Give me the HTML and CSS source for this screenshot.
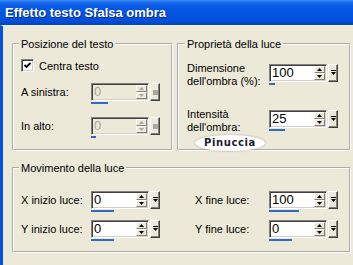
FILE: index.html
```html
<!DOCTYPE html>
<html lang="it">

<head>
    <meta charset="UTF-8">
    <title>Effetto testo Sfalsa ombra</title>
    <link rel="stylesheet" href="styles.css">
</head>

<body>
    <div class="window">
        <div class="titlebar">Effetto testo Sfalsa ombra</div>
        <div class="content">
            <div class="top-row">
                <fieldset class="group group-pos">
                    <legend>Posizione del testo</legend>
                    <label class="check-row">
                        <span class="checkbox">
                            <svg width="9" height="9" viewBox="0 0 9 9"><path d="M1.5 4 L3.5 6 L7.5 2" fill="none" stroke="#000" stroke-width="1.8"/></svg>
                        </span>
                        Centra testo
                    </label>
                    <div class="field-row first">
                        <span class="label">A sinistra:</span>
                        <div class="spin off">
                            <div class="spin-main">
                                <div class="spin-box">
                                    <span class="spin-value">0</span>
                                    <span class="spin-arrows">
                                        <span class="arrow"><svg width="5" height="3"><polygon points="0,3 2.5,0 5,3"/></svg></span>
                                        <span class="arrow"><svg width="5" height="3"><polygon points="0,0 5,0 2.5,3"/></svg></span>
                                    </span>
                                </div>
                                <span class="spin-btn"><i class="dot"></i></span>
                            </div>
                            <span class="spin-bar" style="width:17px"></span>
                        </div>
                    </div>
                    <div class="field-row">
                        <span class="label">In alto:</span>
                        <div class="spin off">
                            <div class="spin-main">
                                <div class="spin-box">
                                    <span class="spin-value">0</span>
                                    <span class="spin-arrows">
                                        <span class="arrow"><svg width="5" height="3"><polygon points="0,3 2.5,0 5,3"/></svg></span>
                                        <span class="arrow"><svg width="5" height="3"><polygon points="0,0 5,0 2.5,3"/></svg></span>
                                    </span>
                                </div>
                                <span class="spin-btn"><i class="dot"></i></span>
                            </div>
                            <span class="spin-bar" style="width:5px"></span>
                        </div>
                    </div>
                </fieldset>

                <fieldset class="group group-light">
                    <legend>Proprietà della luce</legend>
                    <div class="light-row first">
                        <span class="label two">Dimensione<br>dell'ombra (%):</span>
                        <div class="spin">
                            <div class="spin-main">
                                <div class="spin-box">
                                    <span class="spin-value">100</span>
                                    <span class="spin-arrows">
                                        <span class="arrow"><svg width="5" height="3"><polygon points="0,3 2.5,0 5,3"/></svg></span>
                                        <span class="arrow"><svg width="5" height="3"><polygon points="0,0 5,0 2.5,3"/></svg></span>
                                    </span>
                                </div>
                                <span class="spin-btn"><svg width="5" height="6"><rect x="0" y="0" width="5" height="1"/><polygon points="0,2 5,2 2.5,5"/></svg></span>
                            </div>
                            <span class="spin-bar" style="width:6px"></span>
                        </div>
                    </div>
                    <div class="light-row">
                        <span class="label two">Intensità<br>dell'ombra:</span>
                        <div class="spin">
                            <div class="spin-main">
                                <div class="spin-box">
                                    <span class="spin-value">25</span>
                                    <span class="spin-arrows">
                                        <span class="arrow"><svg width="5" height="3"><polygon points="0,3 2.5,0 5,3"/></svg></span>
                                        <span class="arrow"><svg width="5" height="3"><polygon points="0,0 5,0 2.5,3"/></svg></span>
                                    </span>
                                </div>
                                <span class="spin-btn"><svg width="5" height="6"><rect x="0" y="0" width="5" height="1"/><polygon points="0,2 5,2 2.5,5"/></svg></span>
                            </div>
                            <span class="spin-bar" style="width:16px"></span>
                        </div>
                    </div>
                </fieldset>
            </div>

            <fieldset class="group group-move">
                <legend>Movimento della luce</legend>
                <div class="move-grid">
                    <span class="label">X inizio luce:</span>
                    <div class="spin">
                        <div class="spin-main">
                            <div class="spin-box">
                                <span class="spin-value">0</span>
                                <span class="spin-arrows">
                                    <span class="arrow"><svg width="5" height="3"><polygon points="0,3 2.5,0 5,3"/></svg></span>
                                    <span class="arrow"><svg width="5" height="3"><polygon points="0,0 5,0 2.5,3"/></svg></span>
                                </span>
                            </div>
                            <span class="spin-btn"><svg width="5" height="6"><rect x="0" y="0" width="5" height="1"/><polygon points="0,2 5,2 2.5,5"/></svg></span>
                        </div>
                        <span class="spin-bar" style="width:23px"></span>
                    </div>
                    <span></span>
                    <span class="label">X fine luce:</span>
                    <div class="spin">
                        <div class="spin-main">
                            <div class="spin-box">
                                <span class="spin-value">100</span>
                                <span class="spin-arrows">
                                    <span class="arrow"><svg width="5" height="3"><polygon points="0,3 2.5,0 5,3"/></svg></span>
                                    <span class="arrow"><svg width="5" height="3"><polygon points="0,0 5,0 2.5,3"/></svg></span>
                                </span>
                            </div>
                            <span class="spin-btn"><svg width="5" height="6"><rect x="0" y="0" width="5" height="1"/><polygon points="0,2 5,2 2.5,5"/></svg></span>
                        </div>
                        <span class="spin-bar" style="width:30px"></span>
                    </div>

                    <span class="label">Y inizio luce:</span>
                    <div class="spin">
                        <div class="spin-main">
                            <div class="spin-box">
                                <span class="spin-value">0</span>
                                <span class="spin-arrows">
                                    <span class="arrow"><svg width="5" height="3"><polygon points="0,3 2.5,0 5,3"/></svg></span>
                                    <span class="arrow"><svg width="5" height="3"><polygon points="0,0 5,0 2.5,3"/></svg></span>
                                </span>
                            </div>
                            <span class="spin-btn"><svg width="5" height="6"><rect x="0" y="0" width="5" height="1"/><polygon points="0,2 5,2 2.5,5"/></svg></span>
                        </div>
                        <span class="spin-bar" style="width:23px"></span>
                    </div>
                    <span></span>
                    <span class="label">Y fine luce:</span>
                    <div class="spin">
                        <div class="spin-main">
                            <div class="spin-box">
                                <span class="spin-value">0</span>
                                <span class="spin-arrows">
                                    <span class="arrow"><svg width="5" height="3"><polygon points="0,3 2.5,0 5,3"/></svg></span>
                                    <span class="arrow"><svg width="5" height="3"><polygon points="0,0 5,0 2.5,3"/></svg></span>
                                </span>
                            </div>
                            <span class="spin-btn"><svg width="5" height="6"><rect x="0" y="0" width="5" height="1"/><polygon points="0,2 5,2 2.5,5"/></svg></span>
                        </div>
                        <span class="spin-bar" style="width:23px"></span>
                    </div>
                </div>
            </fieldset>

            <!-- firma sopra il riquadro -->
            <div class="stamp">Pinuccia</div>
        </div>
    </div>
</body>

</html>
```

FILE: styles.css
```css
* {
    margin: 0;
    padding: 0;
    box-sizing: border-box;
}

body {
    width: 353px;
    height: 265px;
    overflow: hidden;
    background: #ece9d8;
    font-family: "Liberation Sans", Arial, sans-serif;
    font-size: 11px;
    color: #000;
}

.window {
    height: 265px;
    background: #ece9d8;
}

.titlebar {
    height: 25px;
    line-height: 26px;
    padding-left: 5px;
    color: #fff;
    font-size: 13px;
    font-weight: bold;
    text-shadow: 1px 1px #0a2b8c;
    background: linear-gradient(#3b8cf6 0, #1466ec 3px, #0558e4 8px, #0254e0 16px, #024ed6 21px, #0144c0 25px);
}

.content {
    position: relative;
    height: 240px;
    border-left: 3px solid #0652dc;
    border-top: 1px solid #f6f5ee;
    padding: 11px 2px 0 9px;
}

.top-row {
    display: flex;
    gap: 4px;
}

/* group box */
.group {
    min-width: 0;
    border: 2px groove #fff;
    padding: 0 7px;
}

.group legend {
    margin-left: -2px;
    padding: 0 2px;
    line-height: 14px;
    font-size: 11px;
    background: #ece9d8;
}

.group-pos {
    width: 161px;
    padding-bottom: 11px;
}

.group-light {
    flex: 1;
    padding-left: 8px;
}

.group-move {
    margin-top: 10px;
    padding-bottom: 10px;
}

.label {
    line-height: 18px;
    white-space: nowrap;
}

.label.two {
    line-height: 13px;
}

/* checkbox */
.check-row {
    display: flex;
    align-items: center;
    gap: 5px;
    height: 13px;
    margin-top: 8px;
}

.checkbox {
    width: 13px;
    height: 13px;
    display: flex;
    align-items: center;
    justify-content: center;
    background: #fff;
    border: 1px solid;
    border-color: #808080 #fff #fff #808080;
    box-shadow: inset 1px 1px #404040, inset -1px -1px #d4d0c8;
}

.field-row {
    display: flex;
    margin-top: 13px;
}

.field-row.first {
    margin-top: 11px;
}

.field-row .label {
    width: 70px;
}

.light-row {
    display: flex;
    margin-top: 20px;
}

.light-row.first {
    margin-top: 11px;
}

.light-row .label {
    width: 82px;
}

.light-row .spin {
    margin-top: 2px;
}

.move-grid {
    display: grid;
    grid-template-columns: 70px 69px 35px 74px 69px;
    row-gap: 8px;
    margin-top: 16px;
}

/* spin control */
.spin {
    display: flex;
    flex-direction: column;
    width: 69px;
}

.spin-main {
    display: flex;
    gap: 1px;
    height: 18px;
}

.spin-box {
    width: 58px;
    display: flex;
    padding: 1px;
    background: #fff;
    border: 1px solid;
    border-color: #808080 #fff #fff #808080;
    box-shadow: inset 1px 1px #404040, inset -1px -1px #d4d0c8;
}

.spin-value {
    flex: 1;
    padding-left: 1px;
    font-size: 13px;
    line-height: 14px;
}

.spin-arrows {
    width: 11px;
    display: flex;
    flex-direction: column;
}

.arrow {
    flex: 1;
    display: flex;
    align-items: center;
    justify-content: center;
    background: #ece9d8;
    border: 1px solid;
    border-color: #fff #808080 #808080 #fff;
}

.arrow svg,
.spin-btn svg {
    display: block;
    fill: #000;
}

.spin-btn {
    width: 10px;
    display: flex;
    align-items: center;
    justify-content: center;
    background: #ece9d8;
    border: 1px solid;
    border-color: #fff #404040 #404040 #fff;
    box-shadow: inset -1px -1px #808080;
}

.spin-bar {
    display: block;
    height: 2px;
    margin-top: 1px;
    background: #316ac5;
}

.spin.off .spin-box {
    background: #ece9d8;
}

.spin.off .spin-value {
    color: #aca899;
}

.spin.off .arrow svg {
    fill: #aca899;
}

.dot {
    width: 5px;
    height: 5px;
    background: #aca899;
}

.stamp {
    position: absolute;
    left: 192px;
    top: 109px;
    width: 70px;
    height: 16px;
    line-height: 16px;
    text-align: center;
    border-radius: 50%;
    background: #fff;
    box-shadow: 0 0 2px #9a9a9a;
    font-family: "DejaVu Sans", sans-serif;
    font-weight: bold;
    font-size: 10px;
    letter-spacing: 0.6px;
    color: #1c1c30;
}
```
